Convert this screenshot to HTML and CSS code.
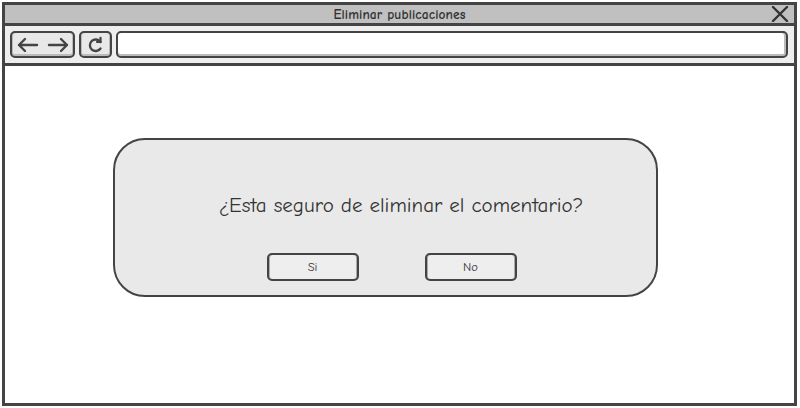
FILE: index.html
```html
<!DOCTYPE html>
<html lang="es">
<head>
<meta charset="utf-8">
<title>Eliminar publicaciones</title>
<link rel="stylesheet" href="styles.css">
</head>
<body>
<div class="window">
  <div class="titlebar">
    <span class="title">Eliminar publicaciones</span>
    <svg class="close" width="18" height="16" viewBox="0 0 18 16"><path d="M2 1 L16 15 M16 1 L2 15" stroke="#333" stroke-width="2.4" fill="none" stroke-linecap="round"/></svg>
  </div>
  <div class="toolbar">
    <div class="btn nav">
      <svg width="22" height="16" viewBox="0 0 22 16"><path d="M2 8 H20 M2 8 L8 2 M2 8 L8 14" stroke="#444" stroke-width="2.4" fill="none" stroke-linecap="round" stroke-linejoin="round"/></svg>
      <svg width="22" height="16" viewBox="0 0 22 16"><path d="M2 8 H20 M20 8 L14 2 M20 8 L14 14" stroke="#444" stroke-width="2.4" fill="none" stroke-linecap="round" stroke-linejoin="round"/></svg>
    </div>
    <div class="btn refresh">
      <svg width="18" height="18" viewBox="0 0 18 18"><path d="M13.5 6 A5.8 5.8 0 1 0 13.5 12.5" stroke="#444" stroke-width="2.4" fill="none" stroke-linecap="round"/><path d="M13.5 1.8 V6 H10" stroke="#444" stroke-width="2.2" fill="none" stroke-linecap="round" stroke-linejoin="round"/></svg>
    </div>
    <div class="url"></div>
  </div>
  <div class="content">
    <div class="dialog">
      <p class="question">¿Esta seguro de eliminar el comentario?</p>
      <div class="actions">
        <button class="dbtn">Si</button>
        <button class="dbtn">No</button>
      </div>
    </div>
  </div>
</div>
</body>
</html>
```

FILE: styles.css
```css
* { box-sizing: border-box; }
html, body { margin: 0; padding: 0; background: #fff; }
body {
  font-family: "Comic Neue", "DejaVu Sans", sans-serif;
  color: #333;
}
.window {
  margin: 2px 0 0 2px;
  width: 795px;
  height: 404px;
  border: 3px solid #444;
  display: flex;
  flex-direction: column;
}
.titlebar {
  height: 21px;
  background: #c0c0c0;
  border-bottom: 3px solid #444;
  display: flex;
  align-items: center;
  justify-content: center;
  position: relative;
}
.title {
  font-size: 13.5px;
  font-weight: 700;
  color: #333;
  letter-spacing: 0.1px;
}
.close {
  position: absolute;
  right: 5px;
  top: 1px;
}
.toolbar {
  height: 40px;
  background: #eeeeee;
  border-bottom: 3px solid #444;
  display: flex;
  align-items: center;
  padding: 0 6px 0 5px;
  gap: 4px;
}
.btn {
  height: 27px;
  border: 2px solid #444;
  border-radius: 5px;
  background: #e8e8e8;
  box-shadow: inset 0 -2px 0 #bbb, inset 1px 0 0 #bbb, inset -1px 0 0 #bbb;
  display: flex;
  align-items: center;
  justify-content: center;
}
.nav { width: 65px; gap: 8px; }
.refresh { width: 33px; }
.url {
  flex: 1;
  height: 27px;
  border: 2px solid #444;
  border-radius: 5px;
  background: #fff;
  box-shadow: inset 0 -2px 0 #bbb, inset -2px 0 0 #bbb;
}
.content {
  flex: 1;
  background: #fff;
  padding: 72px 0 0 108px;
}
.dialog {
  width: 545px;
  height: 159px;
  background: #e9e9e9;
  border: 2px solid #444;
  border-radius: 32px;
  display: flex;
  flex-direction: column;
  align-items: center;
}
.question {
  margin: 53px 0 0 0;
  font-size: 21px;
  color: #333;
  padding-left: 31px;
}
.actions {
  margin-top: 36px;
  display: flex;
  gap: 66px;
  padding-left: 12px;
}
.dbtn {
  width: 92px;
  height: 28px;
  font-family: inherit;
  font-size: 12.5px;
  font-weight: 400;
  color: #333;
  background: #eeeeee;
  border: 2px solid #444;
  border-radius: 5px;
  box-shadow: inset 1px 0 0 #aaa, inset -1px 0 0 #aaa;
  padding: 0;
}
```
